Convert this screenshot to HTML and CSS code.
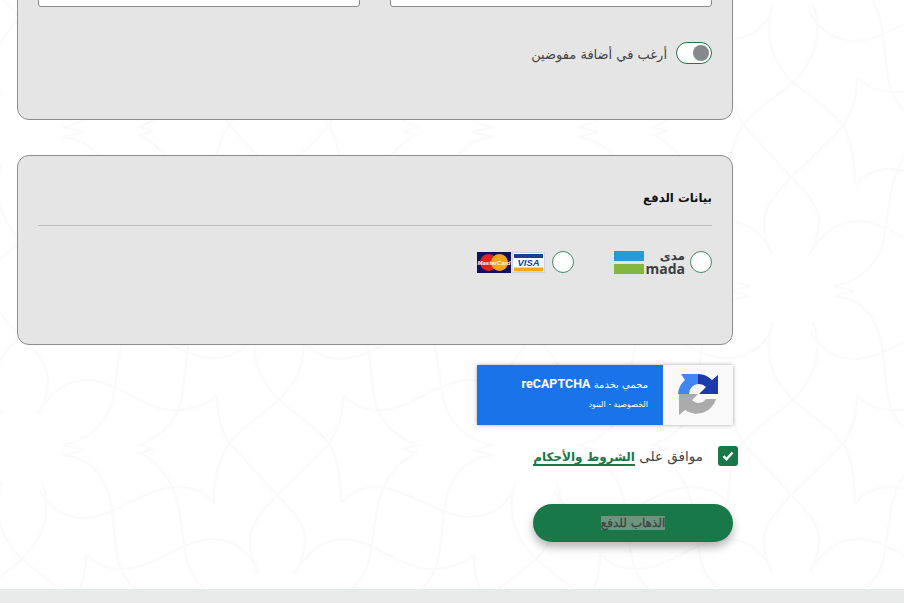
FILE: index.html
```html
<!DOCTYPE html>
<html lang="ar" dir="rtl">
<head>
  <meta charset="UTF-8" />
  <meta name="viewport" content="width=device-width, initial-scale=1.0" />
  <title>بيانات الدفع</title>
  <link rel="stylesheet" href="styles.css">
</head>
<body>

<!-- background ornament, one lens + star cell repeated on a staggered grid -->
<svg class="ornament" width="904" height="603" viewBox="0 0 904 603" aria-hidden="true">
  <defs>
    <g id="cell">
      <path d="M259 322C249 350 256 378 279 400C300 418 322 432 330 445C338 460 341 480 341 503"/>
      <path d="M299 322C309 350 302 378 279 400C258 418 236 432 228 445C218 460 214 480 214 503"/>
      <path d="M217 395C217 420 224 437 233 447C248 464 264 480 277 495C295 512 305 525 305 540C305 552 301 563 295 573"/>
      <path d="M343 395C343 420 335 437 326 447C310 464 293 480 277 495C262 512 250 525 250 540C250 552 253 563 258 573"/>
      <path d="M217 395C205 407 190 410 173 410C145 410 115 380 87 380C70 380 53 390 43 407"/>
      <path d="M343 395C355 407 365 410 380 410C410 410 440 380 470 380C487 380 503 390 513 407"/>
      <path d="M214 503C205 492 193 487 177 487C145 487 115 518 83 518C66 518 50 508 40 492"/>
      <path d="M342 503C350 492 362 487 377 487C405 487 440 517 470 517C490 517 503 508 513 492"/>
      <path d="M84 450L63 455C90 458 106 475 111 505C115 530 115 555 120 567C127 585 142 597 160 604L146 608"/>
      <path d="M153 449L140 453C158 462 172 478 178 505C183 530 184 550 187 560C191 580 210 600 236 604L215 609"/>
      <path d="M472 450L493 455C466 458 450 475 445 505C441 530 441 555 436 567C429 585 414 597 396 604L410 608"/>
      <path d="M403 449L416 453C398 462 384 478 378 505C373 530 372 550 369 560C365 580 346 600 320 604L341 609"/>
    </g>
  </defs>
  <use href="#cell"/>
  <use href="#cell" x="514"/>
  <use href="#cell" y="-318"/>
  <use href="#cell" x="514" y="-318"/>
  <use href="#cell" x="-257" y="159"/>
  <use href="#cell" x="257" y="159"/>
  <use href="#cell" x="771" y="159"/>
  <use href="#cell" x="-257" y="-159"/>
  <use href="#cell" x="257" y="-159"/>
  <use href="#cell" x="771" y="-159"/>
  <use href="#cell" x="-257" y="-477"/>
  <use href="#cell" x="257" y="-477"/>
  <use href="#cell" x="771" y="-477"/>
</svg>

<main class="page">

  <section class="card card-delegate">
    <div class="inputs">
      <input class="field" type="text">
      <input class="field" type="text">
    </div>
    <div class="toggle-row">
      <span class="toggle"><span class="knob"></span></span>
      <span class="toggle-label">أرغب في أضافة مفوضين</span>
    </div>
  </section>

  <section class="card card-payment">
    <h2>بيانات الدفع</h2>
    <hr>
    <div class="methods">
      <span class="radio"></span>
      <div class="logo-mada">
        <div class="mada-words">
          <span class="mada-ar">مدى</span>
          <span class="mada-en">mada</span>
        </div>
        <div class="mada-bars">
          <span class="bar-blue"></span>
          <span class="bar-green"></span>
        </div>
      </div>
      <span class="radio radio-cards"></span>
      <svg class="logo-cards" width="68" height="21" viewBox="0 0 68 21">
        <rect x="0" y="0" width="34" height="21" fill="#10125f"/>
        <circle cx="11.5" cy="10.5" r="8.5" fill="#e2231a"/>
        <circle cx="22.5" cy="10.5" r="8.5" fill="#f5a51c"/>
        <text class="mc-text" x="17" y="12.5" text-anchor="middle">MasterCard</text>
        <rect x="35.5" y="0.5" width="32" height="20" fill="#fff" stroke="#cdd3de"/>
        <rect x="37" y="2" width="29" height="4" fill="#1a3f8f"/>
        <rect x="37" y="15.5" width="29" height="4" fill="#faa61a"/>
        <text class="visa-text" x="51.5" y="14" text-anchor="middle">VISA</text>
      </svg>
    </div>
  </section>

  <div class="recaptcha">
    <div class="recaptcha-icon">
      <svg width="40" height="42" viewBox="0 0 40 42">
        <path fill="#1c3aa9" d="M20 0A20 20 0 0 1 34 6L40 1V20H21L28 13A10 10 0 0 0 20 10Z"/>
        <path fill="#4285f4" d="M3 0H20V10A10 10 0 0 0 11 20H0A20 20 0 0 1 7 6Z"/>
        <path fill="#ababab" d="M1 20H20L14 26A9 9 0 0 0 28 25H38A20 20 0 0 1 7 36L1 41Z"/>
      </svg>
    </div>
    <div class="recaptcha-text">
      <p class="recaptcha-title">محمي بخدمة <b>reCAPTCHA</b></p>
      <p class="recaptcha-links">الخصوصية - البنود</p>
    </div>
  </div>

  <div class="agree">
    <span class="checkbox">
      <svg width="12" height="10" viewBox="0 0 12 10"><path d="M1.5 5.2L4.5 8.2L10.5 1.5" fill="none" stroke="#fff" stroke-width="2.4"/></svg>
    </span>
    <span class="agree-text">موافق على <a href="#terms">الشروط والأحكام</a></span>
  </div>

  <button class="pay-btn" type="button"><span>الذهاب للدفع</span></button>

</main>

<footer class="footer"></footer>

</body>
</html>
```

FILE: styles.css
```css
html, body {
  margin: 0;
  height: 603px;
  overflow: hidden;
  background: #fff;
}
body {
  position: relative;
  font-family: "DejaVu Sans", "Noto Sans", sans-serif;
  color: #333;
}
.ornament {
  position: absolute;
  top: 0;
  left: 0;
}
.ornament path {
  fill: none;
  stroke: #fafafa;
  stroke-width: 2.4;
}
.page {
  position: relative;
  width: 716px;
  margin-right: 171px;
  height: 589px;
}
.page::before {
  content: "";
  display: table;
}
.card {
  box-sizing: border-box;
  background: #e5e5e5;
  border: 1px solid #8a8d8e;
  border-radius: 12px;
  padding: 0 20px;
}
.card-delegate {
  margin-top: -60px;
  padding-top: 20px;
  padding-bottom: 55px;
}
.inputs {
  display: flex;
  gap: 30px;
}
.field {
  box-sizing: border-box;
  width: 322px;
  height: 46px;
  background: #fff;
  border: 1px solid #8a8d8e;
  border-radius: 3px;
}
.toggle-row {
  display: flex;
  align-items: center;
  gap: 9px;
  margin-top: 35px;
  height: 22px;
}
.toggle {
  box-sizing: border-box;
  display: flex;
  justify-content: flex-end;
  align-items: center;
  direction: ltr;
  width: 36px;
  height: 22px;
  padding: 0 2px;
  background: #fff;
  border: 1px solid #197847;
  border-radius: 11px;
}
.knob {
  width: 16px;
  height: 16px;
  border-radius: 50%;
  background: #86888b;
}
.toggle-label {
  font-size: 13px;
  color: #444;
  position: relative;
  top: 1px;
}
.card-payment {
  margin-top: 35px;
  height: 190px;
  padding-top: 32px;
}
.card-payment h2 {
  margin: 0;
  font-size: 11.7px;
  line-height: 20px;
  font-weight: bold;
  color: #111;
}
.card-payment hr {
  margin: 17px 0 0;
  border: 0;
  border-top: 1px solid #bdbdbd;
}
.methods {
  display: flex;
  align-items: flex-start;
  margin-top: 24px;
  height: 25px;
}
.radio {
  box-sizing: border-box;
  width: 22px;
  height: 22px;
  margin-top: 1px;
  border-radius: 50%;
  background: #fff;
  border: 1px solid #3f8f68;
}
.logo-mada {
  display: flex;
  justify-content: space-between;
  width: 71px;
  height: 25px;
  margin-right: 5px;
}
.mada-words {
  display: flex;
  flex-direction: column;
  color: #3a3d40;
  font-weight: bold;
}
.mada-ar {
  font-size: 12px;
  line-height: 12px;
}
.mada-en {
  font-family: "Open Sans", sans-serif;
  font-size: 14px;
  line-height: 13px;
}
.mada-bars {
  display: flex;
  flex-direction: column;
  justify-content: space-between;
  width: 30px;
  padding: 1px 0;
}
.bar-blue, .bar-green {
  height: 10px;
}
.bar-blue {
  background: #259bd6;
}
.bar-green {
  background: #84b740;
}
.radio-cards {
  margin-right: 40px;
}
.logo-cards {
  margin: 2px 7px 0 0;
  direction: ltr;
}
.mc-text {
  font-family: "Liberation Sans", sans-serif;
  font-size: 6px;
  font-style: italic;
  font-weight: bold;
  fill: #fff;
}
.visa-text {
  font-family: "Liberation Sans", sans-serif;
  font-size: 9.5px;
  font-style: italic;
  font-weight: bold;
  fill: #1a3f8f;
}
.recaptcha {
  display: flex;
  width: 256px;
  height: 60px;
  margin-top: 20px;
  background: #1a73e8;
  box-shadow: 0 0 4px rgba(0, 0, 0, 0.35);
}
.recaptcha-icon {
  display: flex;
  justify-content: center;
  align-items: center;
  width: 70px;
  background: #f9f9f9;
}
.recaptcha-text {
  padding: 12px 15px 0 0;
  color: #fff;
}
.recaptcha-text p {
  margin: 0;
}
.recaptcha-title {
  font-size: 10px;
  line-height: 14px;
}
.recaptcha-title b {
  font-family: Roboto, sans-serif;
  font-size: 12.5px;
}
.recaptcha-links {
  margin-top: 6px !important;
  font-size: 8px;
  line-height: 14px;
}
.agree {
  display: flex;
  align-items: center;
  gap: 15px;
  height: 20px;
  margin-top: 21px;
  margin-right: -5px;
}
.checkbox {
  display: flex;
  justify-content: center;
  align-items: center;
  width: 20px;
  height: 20px;
  border-radius: 3px;
  background: #197847;
}
.agree-text {
  font-size: 13.5px;
  color: #444;
}
.agree-text a {
  color: #197847;
  font-size: 12px;
  font-weight: bold;
  text-decoration: none;
  border-bottom: 2px solid #197847;
}
.pay-btn {
  display: block;
  width: 200px;
  height: 38px;
  margin-top: 38px;
  padding: 0 0 2px;
  border: 0;
  border-radius: 19px;
  background: #197847;
  box-shadow: 0 5px 10px rgba(0, 0, 0, 0.3);
  font-family: inherit;
}
.pay-btn span {
  background: #6b957f;
  color: #3c4540;
  font-size: 12px;
  -webkit-text-stroke: 0.3px #3c4540;
}
.footer {
  position: relative;
  height: 14px;
  background: #e9eaea;
}
```
